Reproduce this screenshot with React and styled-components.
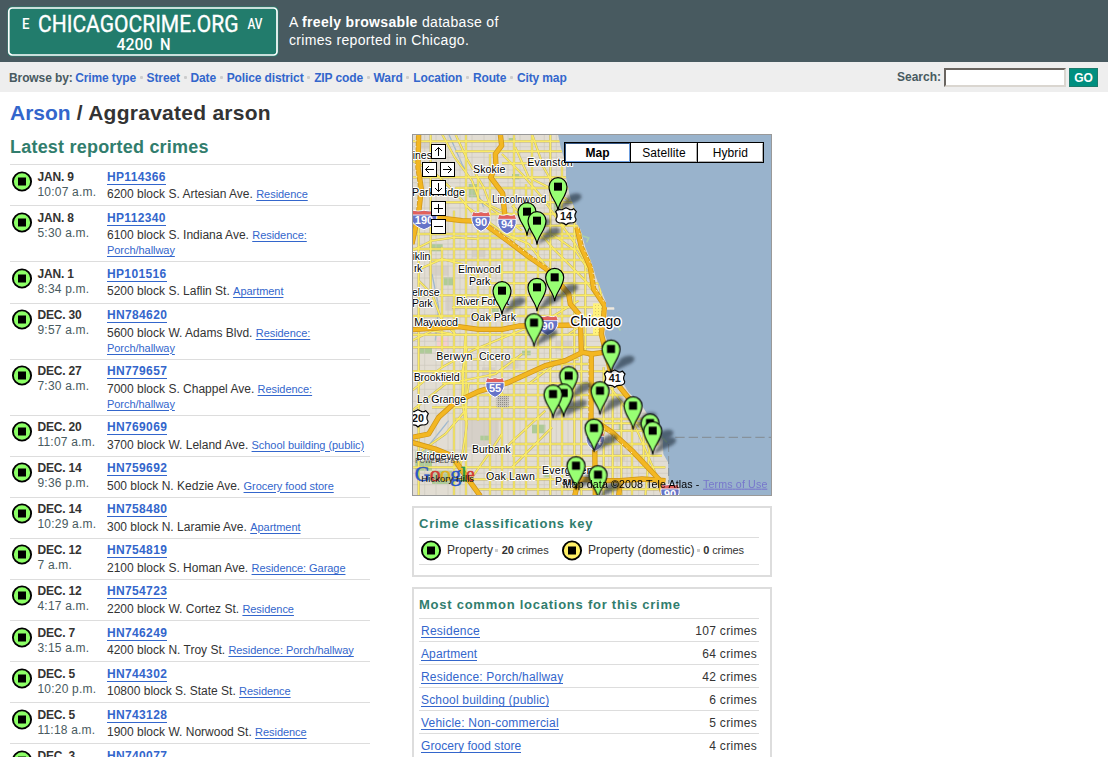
import React from "react";
import styled, { createGlobalStyle } from "styled-components";

const Global = createGlobalStyle`
  html, body { margin: 0; background: #fff; }
  body {
    font: 12px/15px "Liberation Sans", Arial, sans-serif;
    color: #333;
    height: 757px;
    overflow: hidden;
  }
`;

const Page = styled.div`
  height: 757px;
  overflow: hidden;
`;

const Header = styled.header`
  display: flex;
  height: 62px;
  background: #485a60;
`;

const Sign = styled.svg`
  display: block;
  margin: 6px 0 0 7px;
`;

const Tagline = styled.p`
  margin: 14px 0 0 10px;
  font-size: 14px;
  line-height: 17.5px;
  color: #fff;
`;

const TagRow = styled.span`
  display: block;
  white-space: nowrap;
  letter-spacing: ${(p) => p.$spacing};
`;

const NavBar = styled.nav`
  display: flex;
  align-items: center;
  justify-content: space-between;
  box-sizing: border-box;
  height: 30px;
  padding: 1px 10px 0 9px;
  background: #eee;
  font-weight: bold;
  color: #485a60;
`;

const NavLinks = styled.div`
  display: flex;
  margin-top: 1px;
  white-space: nowrap;
`;

const NavLabel = styled.span`
  width: 66.2px;
  letter-spacing: -0.1px;
`;

const NavItem = styled.a`
  color: #36c;
  letter-spacing: -0.12px;
  & + &::before {
    content: "";
    display: inline-block;
    width: 3px;
    height: 3px;
    margin: 0 4px 3px 3.6px;
    background: #ccc;
    border-radius: 1px;
  }
`;

const SearchForm = styled.div`
  display: flex;
  align-items: center;
`;

const SearchInput = styled.input`
  box-sizing: border-box;
  width: 122px;
  height: 19px;
  margin: 0 3px 0 3px;
  padding: 0 2px;
  border: 2px solid;
  border-color: #6a6560 #dad6d0 #dad6d0 #6a6560;
  background: #fff;
`;

const GoButton = styled.button`
  width: 29px;
  height: 19px;
  padding: 0;
  border: 1px solid #1d7a6b;
  background: #008f80;
  color: #fff;
  font: bold 12px "Liberation Sans", Arial, sans-serif;
`;

const Title = styled.h1`
  box-sizing: border-box;
  margin: 0;
  padding: 9px 0 0 10px;
  height: 33px;
  font-size: 21px;
  line-height: 24px;
  letter-spacing: 0.26px;
`;

const TitleLink = styled.a`
  color: #36c;
  letter-spacing: 0;
`;

const Columns = styled.main`
  display: grid;
  grid-template-columns: 360px 360px;
  column-gap: 42px;
  padding: 0 10px;
`;

const ListHeading = styled.h2`
  margin: 0;
  height: 30.37px;
  box-sizing: border-box;
  padding-top: 2px;
  font-size: 18px;
  line-height: 22px;
  letter-spacing: 0.21px;
  color: #317d6d;
`;

const LeftColumn = styled.section`
  margin-top: 9px;
`;

const CrimeRow = styled.article`
  display: grid;
  grid-template-columns: 27.5px 69.5px 263px;
  box-sizing: border-box;
  height: ${(p) => (p.$tall ? "56px" : "41.1px")};
  padding-top: 4.5px;
  border-top: 1px solid #ddd;
`;

const DotSvg = styled.svg`
  display: block;
  margin: ${(p) => p.$margin || "1px 0 0 1px"};
`;

const DateText = styled.div`
  font-weight: bold;
  line-height: 15px;
  letter-spacing: -0.2px;
  white-space: nowrap;
`;

const TimeText = styled.div`
  line-height: 15px;
  color: #485a60;
  letter-spacing: 0.2px;
  white-space: nowrap;
`;

const CaseLink = styled.a`
  display: inline-block;
  height: 14px;
  line-height: 15px;
  font-weight: bold;
  letter-spacing: 0.35px;
  color: #36c;
  border-bottom: 1px solid #36c;
`;

const Address = styled.div`
  line-height: 15px;
  margin-top: 2.5px;
`;

const PlaceLink = styled.a`
  font-size: 11px;
  color: #36c;
  letter-spacing: -0.05px;
  text-decoration: underline;
  text-underline-offset: 2px;
  text-decoration-thickness: 1px;
`;

const RightColumn = styled.section`
  display: flex;
  flex-direction: column;
  gap: 10px;
  margin-top: 9px;
`;

const MapFrame = styled.div`
  position: relative;
  box-sizing: border-box;
  width: 360px;
  height: 362px;
  border: 1px solid #999;
  overflow: hidden;
`;

const MapSvg = styled.svg`
  display: block;
`;

const MapTypes = styled.div`
  position: absolute;
  top: 7px;
  left: 151px;
  display: flex;
  width: 198px;
  border: 1px solid #000;
  background: #000;
  gap: 1px;
`;

const MapType = styled.div`
  flex: 1;
  box-sizing: border-box;
  height: 19px;
  line-height: 18px;
  text-align: center;
  letter-spacing: 0.1px;
  color: #000;
  background: #fff;
  font-weight: ${(p) => (p.$active ? "bold" : "normal")};
  border: 1px solid;
  border-color: ${(p) => (p.$active ? "#345684 #6c9ddf #6c9ddf #345684" : "#fff #b0b0b0 #b0b0b0 #fff")};
`;

const Control = styled.div`
  position: absolute;
  left: ${(p) => p.$x}px;
  top: ${(p) => p.$y}px;
  box-sizing: border-box;
  width: 15px;
  height: 15px;
  border: 1px solid #000;
  background: #fff;
`;

const Panel = styled.section`
  box-sizing: border-box;
  width: 360px;
  height: ${(p) => p.$height}px;
  padding: 8px 11px 0 5px;
  border: 2px solid #ddd;
`;

const PanelTitle = styled.h3`
  margin: 0;
  height: 21px;
  font-size: 13px;
  line-height: 16px;
  letter-spacing: 0.75px;
  color: #317d6d;
`;

const KeyRow = styled.div`
  display: flex;
  align-items: center;
  box-sizing: border-box;
  height: 28px;
  padding-bottom: 2px;
  border: solid #ddd;
  border-width: 1px 0;
  white-space: nowrap;
`;

const KeyText = styled.span`
  width: ${(p) => p.$width}px;
  letter-spacing: 0.1px;
`;

const KeyCount = styled.small`
  font-size: 11px;
  letter-spacing: -0.1px;
  &::before {
    content: "";
    display: inline-block;
    width: 3px;
    height: 3px;
    margin: 0 3.4px 2px 2.2px;
    background: #ccc;
  }
`;

const LocationRow = styled.div`
  display: flex;
  justify-content: space-between;
  box-sizing: border-box;
  height: 23px;
  padding: 5px 2px 0;
  border-top: 1px solid #ddd;
`;

const LocationLink = styled.a`
  height: 13px;
  line-height: 15px;
  color: #36c;
  border-bottom: 1px solid #36c;
  letter-spacing: ${(p) => p.$spacing || "0.18px"};
`;

const LocationCount = styled.span`
  letter-spacing: 0.3px;
`;

const Dot = ({ color = "#8cff66", margin }) => (
  <DotSvg width="22" height="21" viewBox="0 0 22 21" $margin={margin}>
    <circle cx="11" cy="10.5" r="9.1" fill={color} stroke="#000" strokeWidth="1.9" />
    <rect x="7" y="6.5" width="8" height="8" />
  </DotSvg>
);

const crimes = [
  ["JAN. 9", "10:07 a.m.", "HP114366", "6200 block S. Artesian Ave.", "Residence"],
  ["JAN. 8", "5:30 a.m.", "HP112340", "6100 block S. Indiana Ave.", "Residence:", "Porch/hallway"],
  ["JAN. 1", "8:34 p.m.", "HP101516", "5200 block S. Laflin St.", "Apartment"],
  ["DEC. 30", "9:57 a.m.", "HN784620", "5600 block W. Adams Blvd.", "Residence:", "Porch/hallway"],
  ["DEC. 27", "7:30 a.m.", "HN779657", "7000 block S. Chappel Ave.", "Residence:", "Porch/hallway"],
  ["DEC. 20", "11:07 a.m.", "HN769069", "3700 block W. Leland Ave.", "School building (public)"],
  ["DEC. 14", "9:36 p.m.", "HN759692", "500 block N. Kedzie Ave.", "Grocery food store"],
  ["DEC. 14", "10:29 a.m.", "HN758480", "300 block N. Laramie Ave.", "Apartment"],
  ["DEC. 12", "7 a.m.", "HN754819", "2100 block S. Homan Ave.", "Residence: Garage"],
  ["DEC. 12", "4:17 a.m.", "HN754723", "2200 block W. Cortez St.", "Residence"],
  ["DEC. 7", "3:15 a.m.", "HN746249", "4200 block N. Troy St.", "Residence: Porch/hallway"],
  ["DEC. 5", "10:20 p.m.", "HN744302", "10800 block S. State St.", "Residence"],
  ["DEC. 5", "11:18 a.m.", "HN743128", "1900 block W. Norwood St.", "Residence"],
  ["DEC. 3", "", "HN740077", "", ""],
];

const locations = [
  ["Residence", "107 crimes", "0.25px"],
  ["Apartment", "64 crimes", "0.1px"],
  ["Residence: Porch/hallway", "42 crimes"],
  ["School building (public)", "6 crimes"],
  ["Vehicle: Non-commercial", "5 crimes", "0.22px"],
  ["Grocery food store", "4 crimes", "0.05px"],
];

/* The map is drawn in units of a third of a pixel. */
const LAND =
  "M0 0H438L446 40 462 90 462 130 472 180 486 220 494 270 505 285 520 340 540 390 552 430 568 470 582 505 582 520H606V526H584L586 560 578 600 592 640 600 700 622 730 650 775 690 815 712 850 740 885 752 910 754 960 768 985 770 1040 790 1090H0Z";

const V_ROADS = [
  [20, 0, 1086], [56, 0, 470], [90, 340, 700], [126, 230, 1086], [162, 0, 1086], [198, 130, 860],
  [234, 60, 1086], [270, 330, 1086], [306, 0, 1086], [342, 150, 1086], [360, 0, 330], [378, 330, 1086],
  [415, 0, 1086], [450, 90, 1086], [487, 200, 1086], [508, 560, 1086], [520, 380, 660], [575, 700, 1086],
  [602, 760, 1086], [628, 800, 1086], [660, 850, 1086], [695, 850, 1000],
];
const H_ROADS = [
  [22, 0, 450], [52, 130, 450], [88, 270, 470], [130, 0, 480], [162, 130, 480], [205, 60, 490],
  [240, 230, 500], [275, 290, 500], [300, 0, 510], [312, 200, 510], [345, 0, 520], [378, 60, 540],
  [415, 200, 545], [448, 230, 560], [484, 0, 570], [520, 120, 575], [546, 0, 580], [602, 0, 570],
  [640, 0, 590], [676, 160, 500], [712, 0, 590], [748, 90, 600], [783, 160, 650], [820, 60, 530],
  [855, 130, 700], [868, 550, 720], [890, 560, 740], [930, 300, 740], [965, 300, 750], [1000, 0, 760],
  [1036, 120, 760], [1066, 200, 740],
];
const MINOR_V = [38, 72, 108, 144, 180, 216, 252, 288, 324, 397, 433, 468, 590, 615, 645, 680, 725];
const MINOR_H = [38, 70, 108, 146, 184, 222, 258, 330, 362, 396, 432, 466, 502, 580, 622, 658, 694, 730, 766, 802, 838, 948, 982, 1018, 1052];
const DIAGONALS = [
  "M90 0 128 70 180 140 200 195 260 240 330 290",
  "M130 0 165 75 215 160 235 215 300 245",
  "M0 80 60 110 130 175 180 235",
  "M270 60 330 120 390 190 440 260 490 330 540 420",
  "M310 40 350 130 420 165 470 200",
  "M360 0 395 100 440 180",
  "M300 215 360 270 430 350 520 440 550 480",
  "M160 215 280 300 350 330 420 420",
  "M0 350 60 320 130 310 200 315",
  "M0 415 90 375 150 390 198 440",
  "M20 440 60 480 90 560 130 600",
  "M0 620 60 590 120 600",
  "M0 770 90 700 180 650 300 600 400 560 500 500",
  "M0 830 100 750 250 720 330 660",
  "M160 860 150 800 160 600",
  "M30 950 100 900 160 830 170 750",
  "M270 900 230 960 180 1030",
  "M260 960 400 830",
  "M300 1000 420 880",
  "M165 640 150 720 165 870 145 1000",
  "M540 360 560 440 570 500",
  "M420 300 490 350 545 430",
  "M595 760 640 820 700 900 712 950 700 1086",
  "M640 820 680 900 740 1040",
  "M470 600 530 560 575 550",
  "M350 750 430 690 540 690",
];
const HIGHWAYS = [
  "M20 0 18 100 28 165 20 235 0 330",
  "M265 0 269 35 250 60 252 98 236 130 272 178 278 240",
  "M0 250 70 250 150 260 205 262 245 290 300 330 350 368 410 410 440 445 470 480 475 510 505 545 508 655",
  "M495 280 508 340 535 400 545 465 578 515 575 545 568 600 588 680 600 730 640 780 665 810",
  "M0 587 140 578 200 586 270 586 320 576 508 573",
  "M0 910 50 900 80 850 130 805 200 772 290 745 400 695 460 680 512 655 540 660 575 655",
  "M0 925 70 945 120 965 150 1010 205 1086",
  "M538 655 537 860 548 920 550 1086",
  "M548 860 600 895 660 950 740 1035 755 1086",
  "M488 1086 500 1035 560 1040 625 1040 690 1035 760 1040",
  "M625 1040 620 1086",
];
const PARKS = [
  [95, 430, 30, 24], [360, 872, 40, 26], [52, 330, 40, 22], [425, 195, 26, 40], [290, 12, 20, 12],
  [385, 560, 24, 16], [20, 640, 40, 20], [330, 650, 26, 14], [10, 950, 50, 60], [205, 905, 25, 14],
  [300, 120, 22, 16], [560, 770, 18, 40], [620, 870, 14, 24], [520, 300, 12, 20], [170, 150, 26, 40],
  [60, 1010, 60, 40], [395, 1010, 20, 20], [240, 505, 20, 30],
];
const BLOCKS = [
  [50, 395, 60, 30], [75, 610, 36, 36], [150, 860, 110, 80], [270, 680, 50, 24], [20, 20, 40, 24], [210, 700, 40, 30],
  [100, 490, 40, 40], [430, 620, 50, 30], [600, 950, 40, 30], [180, 340, 40, 30],
];

/* x, baseline, width, size, text */
const LABELS = [
  [2, 76, 58, 31, "ines"],
  [183, 118, 97, 31, "Skokie"],
  [346, 95, 136, 31, "Evanston"],
  [0, 185, 159, 31, "Park Ridge"],
  [240, 206, 163, 29, "Lincolnwood"],
  [2, 379, 53, 31, "iklin"],
  [6, 415, 25, 31, "rk"],
  [138, 418, 128, 31, "Elmwood"],
  [171, 454, 64, 31, "Park"],
  [0, 487, 83, 31, "elrose"],
  [0, 520, 62, 31, "Park"],
  [132, 512, 160, 31, "River Forest"],
  [177, 562, 135, 31, "Oak Park"],
  [7, 575, 131, 31, "Maywood"],
  [73, 677, 108, 31, "Berwyn"],
  [201, 677, 94, 31, "Cicero"],
  [5, 740, 138, 31, "Brookfield"],
  [15, 806, 147, 31, "La Grange"],
  [180, 956, 116, 31, "Burbank"],
  [13, 977, 153, 31, "Bridgeview"],
  [222, 1039, 147, 31, "Oak Lawn"],
  [390, 1019, 152, 31, "Evergreen"],
  [429, 1054, 64, 31, "Park"],
  [475, 577, 152, 41, "Chicago"],
];

const PINS = [
  [438, 158], [345, 233], [375, 260], [428, 430], [375, 460], [270, 470], [366, 566], [597, 645],
  [470, 725], [455, 777], [423, 780], [564, 770], [663, 815], [714, 867], [546, 882], [722, 890],
  [492, 995], [558, 1022],
];

const Interstate = ({ x, y, w = 54, label, dim }) => (
  <g transform={`translate(${x} ${y})`} opacity={dim ? 0.8 : 1}>
    <path
      d={`M${-w / 2 + 4} -27Q${-w / 4} -22 0 -27Q${w / 4} -22 ${w / 2 - 4} -27Q${w / 2 + 4} -6 ${w / 2 - 2} 6Q${w / 4 + 6} 22 0 31Q${-w / 4 - 6} 22 ${-w / 2 + 2} 6Q${-w / 2 - 4} -6 ${-w / 2 + 4} -27Z`}
      fill="#6674c8"
      stroke="#fff"
      strokeWidth="3"
    />
    <path d={`M${-w / 2 + 4} -26Q${-w / 4} -21 0 -26Q${w / 4} -21 ${w / 2 - 4} -26L${w / 2} -14H${-w / 2}Z`} fill="#e2605c" />
    <path d={`M${-w / 2} -13H${w / 2}`} stroke="#fff" strokeWidth="2.5" />
    <text x="0" y="14" textAnchor="middle" fontSize="33" fontWeight="bold" fill="#fff">{label}</text>
  </g>
);

const UsRoute = ({ x, y, label }) => (
  <g transform={`translate(${x} ${y})`}>
    <path
      d="M-23 -22Q-15 -16 -8 -21L0 -25 8 -21Q15 -16 23 -22L31 -13Q23 0 30 9Q31 20 15 21Q6 20 0 27Q-6 20 -15 21Q-31 20 -30 9Q-23 0 -31 -13Z"
      fill="#fff"
      stroke="#000"
      strokeWidth="3.5"
      strokeLinejoin="round"
    />
    <text x="0" y="11" textAnchor="middle" fontSize="32" fontWeight="bold" fill="#111">{label}</text>
  </g>
);

const PIN = "M0 72C-1 46 -27 29 -27 0A27 27 0 0 1 27 0C27 29 1 46 0 72Z";

const CityMap = () => (
  <MapSvg width="358" height="360" viewBox="3 3 1074 1080" fontFamily="Liberation Sans, Arial, sans-serif">
    <defs>
      <clipPath id="land"><path d={LAND} /></clipPath>
      <filter id="soft" x="-50%" y="-50%" width="200%" height="200%"><feGaussianBlur stdDeviation="4" /></filter>
      <pattern id="yard" width="6" height="6" patternUnits="userSpaceOnUse">
        <rect width="6" height="6" fill="#c8c4bc" />
        <rect width="3" height="3" fill="#8f8c88" />
      </pattern>
      <pattern id="loop" width="9" height="9" patternUnits="userSpaceOnUse">
        <rect width="9" height="9" fill="#fff27c" />
        <rect width="3" height="3" fill="#d8c870" />
      </pattern>
    </defs>
    <rect width="1086" height="1090" fill="#99b3cc" />
    <path d={LAND} fill="#e2ddd3" />
    <g clipPath="url(#land)" fill="none">
      {BLOCKS.map(([x, y, w, h], i) => <rect key={i} x={x} y={y} width={w} height={h} fill={i === 1 ? "#f2cfcf" : "#d6d0c8"} />)}
      {PARKS.map(([x, y, w, h], i) => <rect key={i} x={x} y={y} width={w} height={h} fill="#aecb98" />)}
      <path d="M110 0 150 90 195 170 215 220M60 420 80 520 70 620M30 960 110 860" stroke="#9fb8cf" strokeWidth="4" />
      <g stroke="#cdc8be" strokeWidth="2">
        {MINOR_V.map((x) => <path key={x} d={`M${x} 0V1090`} />)}
        {MINOR_H.map((y) => <path key={y} d={`M0 ${y}H800`} />)}
      </g>
      {[["#bfb06a", 6.8], ["#fbec66", 4.4]].map(([c, w]) => (
        <g key={c} stroke={c} strokeWidth={w} strokeLinejoin="round">
          {V_ROADS.map(([x, a, b]) => <path key={x} d={`M${x} ${a}V${b}`} />)}
          {H_ROADS.map(([y, a, b]) => <path key={y} d={`M${a} ${y}H${b}`} />)}
          {DIAGONALS.map((d) => <path key={d} d={d} />)}
        </g>
      ))}
      <rect x="254" y="786" width="36" height="34" fill="url(#yard)" />
      <rect x="543" y="508" width="30" height="94" fill="url(#loop)" />
      {[["#cf961a", 16], ["#f3b722", 11.5]].map(([c, w]) => (
        <g key={c} stroke={c} strokeWidth={w} strokeLinejoin="round">
          {HIGHWAYS.map((d) => <path key={d} d={d} />)}
        </g>
      ))}
      <g stroke="#fff" strokeWidth="2.5" strokeDasharray="4 14">
        <path d="M12 0 10 100 20 165 12 235M499 280 514 340 541 400 551 465 584 515M246 284 300 324 352 362 412 404M530 670V850M546 862 600 902 660 957" />
      </g>
    </g>
    <path d="M510 305 530 312 524 325M610 560 625 590M745 905 765 925" stroke="#a9cfae" strokeWidth="5" fill="none" />
    <path d="M585 524H607" stroke="#eee9df" strokeWidth="6" />
    <path d="M790 910H1080" stroke="#87929c" strokeWidth="4" strokeDasharray="28 12" />
    <path d="M770 930V1086" stroke="#87929c" strokeWidth="3" strokeDasharray="24 12" />

    <Interstate x={36} y={256} w={76} label="190" />
    <Interstate x={207} y={261} label="90" />
    <Interstate x={285} y={269} label="94" />
    <Interstate x={407} y={573} w={60} label="90" />
    <Interstate x={249} y={759} label="55" />
    <Interstate x={550} y={920} label="94" dim />
    <Interstate x={774} y={1078} label="90" />
    <UsRoute x={462} y={246} label="14" />
    <UsRoute x={608} y={733} label="41" />
    <UsRoute x={18} y={852} label="20" />

    {LABELS.map(([x, y, w, s, t]) => (
      <text key={`${t}${x}${y}`} x={x} y={y} fontSize={s + 1} textLength={w} fill="#000" stroke="#fff" strokeWidth={s > 35 ? 9 : 6} strokeLinejoin="round" paintOrder="stroke">{t}</text>
    ))}

    <text x="10" y="988" fontSize="20" textLength="132" fill="#444">POWERED BY</text>
    <g fontFamily="Liberation Serif, serif" fontSize="66" strokeWidth="1.5">
      <text x="8" y="1040" textLength="46" lengthAdjust="spacingAndGlyphs" fill="#2a56c6" stroke="#2a56c6">G</text>
      <text x="53" y="1040" fill="#d03a34" stroke="#d03a34">o</text>
      <text x="84" y="1040" fill="#e2b21c" stroke="#e2b21c">o</text>
      <text x="115" y="1040" fill="#2a56c6" stroke="#2a56c6">g</text>
      <text x="146" y="1040" fill="#2e9a48" stroke="#2e9a48">l</text>
      <text x="162" y="1040" textLength="26" lengthAdjust="spacingAndGlyphs" fill="#d03a34" stroke="#d03a34">e</text>
    </g>
    <text x="28" y="1043" fontSize="28" textLength="158" fill="#111">Hickory Hills</text>

    <g filter="url(#soft)" fill="#1f2a38" opacity="0.6">
      {PINS.map(([x, y]) => (
        <path key={`${x}-${y}`} transform={`translate(${x} ${y})`} d="M0 72L30 28Q48 16 66 22Q78 32 58 44Q35 54 0 72Z" />
      ))}
    </g>
    {PINS.map(([x, y]) => (
      <g key={`${x}-${y}`} transform={`translate(${x} ${y})`}>
        <path d={PIN} fill="#98ff73" stroke="#000" strokeWidth="3.5" />
        <rect x="-12" y="-12" width="24" height="24" />
      </g>
    ))}
    <text x="452" y="1061" fontSize="32" textLength="410" fill="#000">Map data ©2008 Tele Atlas -</text>
    <text x="873" y="1061" fontSize="32" textLength="193" fill="#7777cc" textDecoration="underline">Terms of Use</text>
  </MapSvg>
);

const controls = [
  [18, 9, "M6.5 11V2.5M3 6 6.5 2.5 10 6"],
  [9, 27, "M11 6.5H2.5M6 3 2.5 6.5 6 10"],
  [27, 27, "M2 6.5H10.5M7 3 10.5 6.5 7 10"],
  [18, 45, "M6.5 2V10.5M3 7 6.5 10.5 10 7"],
  [18, 66, "M2 6.5H11M6.5 2V11"],
  [18, 84, "M2 6.5H11"],
];

export default function App() {
  return (
    <Page>
      <Global />
      <Header>
        <Sign width="272" height="51" viewBox="0 0 272 51" fontFamily="Roboto, sans-serif" fill="#fff">
          <rect x="0.5" y="0.5" width="271" height="50" rx="4.5" fill="#2a7f6f" />
          <rect x="1.8" y="2" width="268.2" height="47" rx="3.5" fill="#227c6c" stroke="#fff" strokeWidth="1.7" />
          <text x="15" y="23" fontSize="15" fontWeight="500" textLength="7.5" lengthAdjust="spacingAndGlyphs">E</text>
          <text x="31" y="25.6" fontSize="24" textLength="200.5" lengthAdjust="spacingAndGlyphs" stroke="#fff" strokeWidth="0.35">CHICAGOCRIME.ORG</text>
          <text x="240.5" y="22.8" fontSize="15" fontWeight="500" textLength="15" lengthAdjust="spacingAndGlyphs">AV</text>
          <text x="109.5" y="43.8" fontSize="16" fontWeight="500" textLength="36" lengthAdjust="spacingAndGlyphs">4200</text>
          <text x="153" y="43.8" fontSize="16" fontWeight="500" textLength="10.5" lengthAdjust="spacingAndGlyphs">N</text>
        </Sign>
        <Tagline>
          <TagRow $spacing="0.32px">A <b>freely browsable</b> database of</TagRow>
          <TagRow $spacing="0.33px">crimes reported in Chicago.</TagRow>
        </Tagline>
      </Header>
      <NavBar>
        <NavLinks>
          <NavLabel>Browse by:</NavLabel>
          {["Crime type", "Street", "Date", "Police district", "ZIP code", "Ward", "Location", "Route", "City map"].map((t) => (
            <NavItem key={t}>{t}</NavItem>
          ))}
        </NavLinks>
        <SearchForm>
          Search:
          <SearchInput />
          <GoButton>GO</GoButton>
        </SearchForm>
      </NavBar>
      <Title><TitleLink>Arson</TitleLink> / Aggravated arson</Title>
      <Columns>
        <LeftColumn>
          <ListHeading>Latest reported crimes</ListHeading>
          {crimes.map(([date, time, id, address, place, place2]) => (
            <CrimeRow key={id} $tall={!!place2}>
              <Dot />
              <div>
                <DateText>{date}</DateText>
                <TimeText>{time}</TimeText>
              </div>
              <div>
                <CaseLink>{id}</CaseLink>
                <Address>
                  {address} <PlaceLink>{place}</PlaceLink>
                  {place2 && <><br /><PlaceLink>{place2}</PlaceLink></>}
                </Address>
              </div>
            </CrimeRow>
          ))}
        </LeftColumn>
        <RightColumn>
          <MapFrame>
            <CityMap />
            {controls.map(([x, y, d], i) => (
              <Control key={i} $x={x} $y={y}>
                <MapSvg width="13" height="13" viewBox="0 0 13 13" fill="none" stroke="#000"><path d={d} /></MapSvg>
              </Control>
            ))}
            <MapTypes>
              <MapType $active>Map</MapType>
              <MapType>Satellite</MapType>
              <MapType>Hybrid</MapType>
            </MapTypes>
          </MapFrame>
          <Panel $height={71}>
            <PanelTitle>Crime classifications key</PanelTitle>
            <KeyRow>
              <Dot margin="0 5px 0 1px" />
              <KeyText $width={113}>Property<KeyCount><b>20</b> crimes</KeyCount></KeyText>
              <Dot margin="0 5px 0 1px" color="#fff066" />
              <KeyText $width={170}>Property (domestic)<KeyCount><b>0</b> crimes</KeyCount></KeyText>
            </KeyRow>
          </Panel>
          <Panel $height={220}>
            <PanelTitle>Most common locations for this crime</PanelTitle>
            {locations.map(([name, count, spacing]) => (
              <LocationRow key={name}>
                <LocationLink $spacing={spacing}>{name}</LocationLink>
                <LocationCount>{count}</LocationCount>
              </LocationRow>
            ))}
          </Panel>
        </RightColumn>
      </Columns>
    </Page>
  );
}
